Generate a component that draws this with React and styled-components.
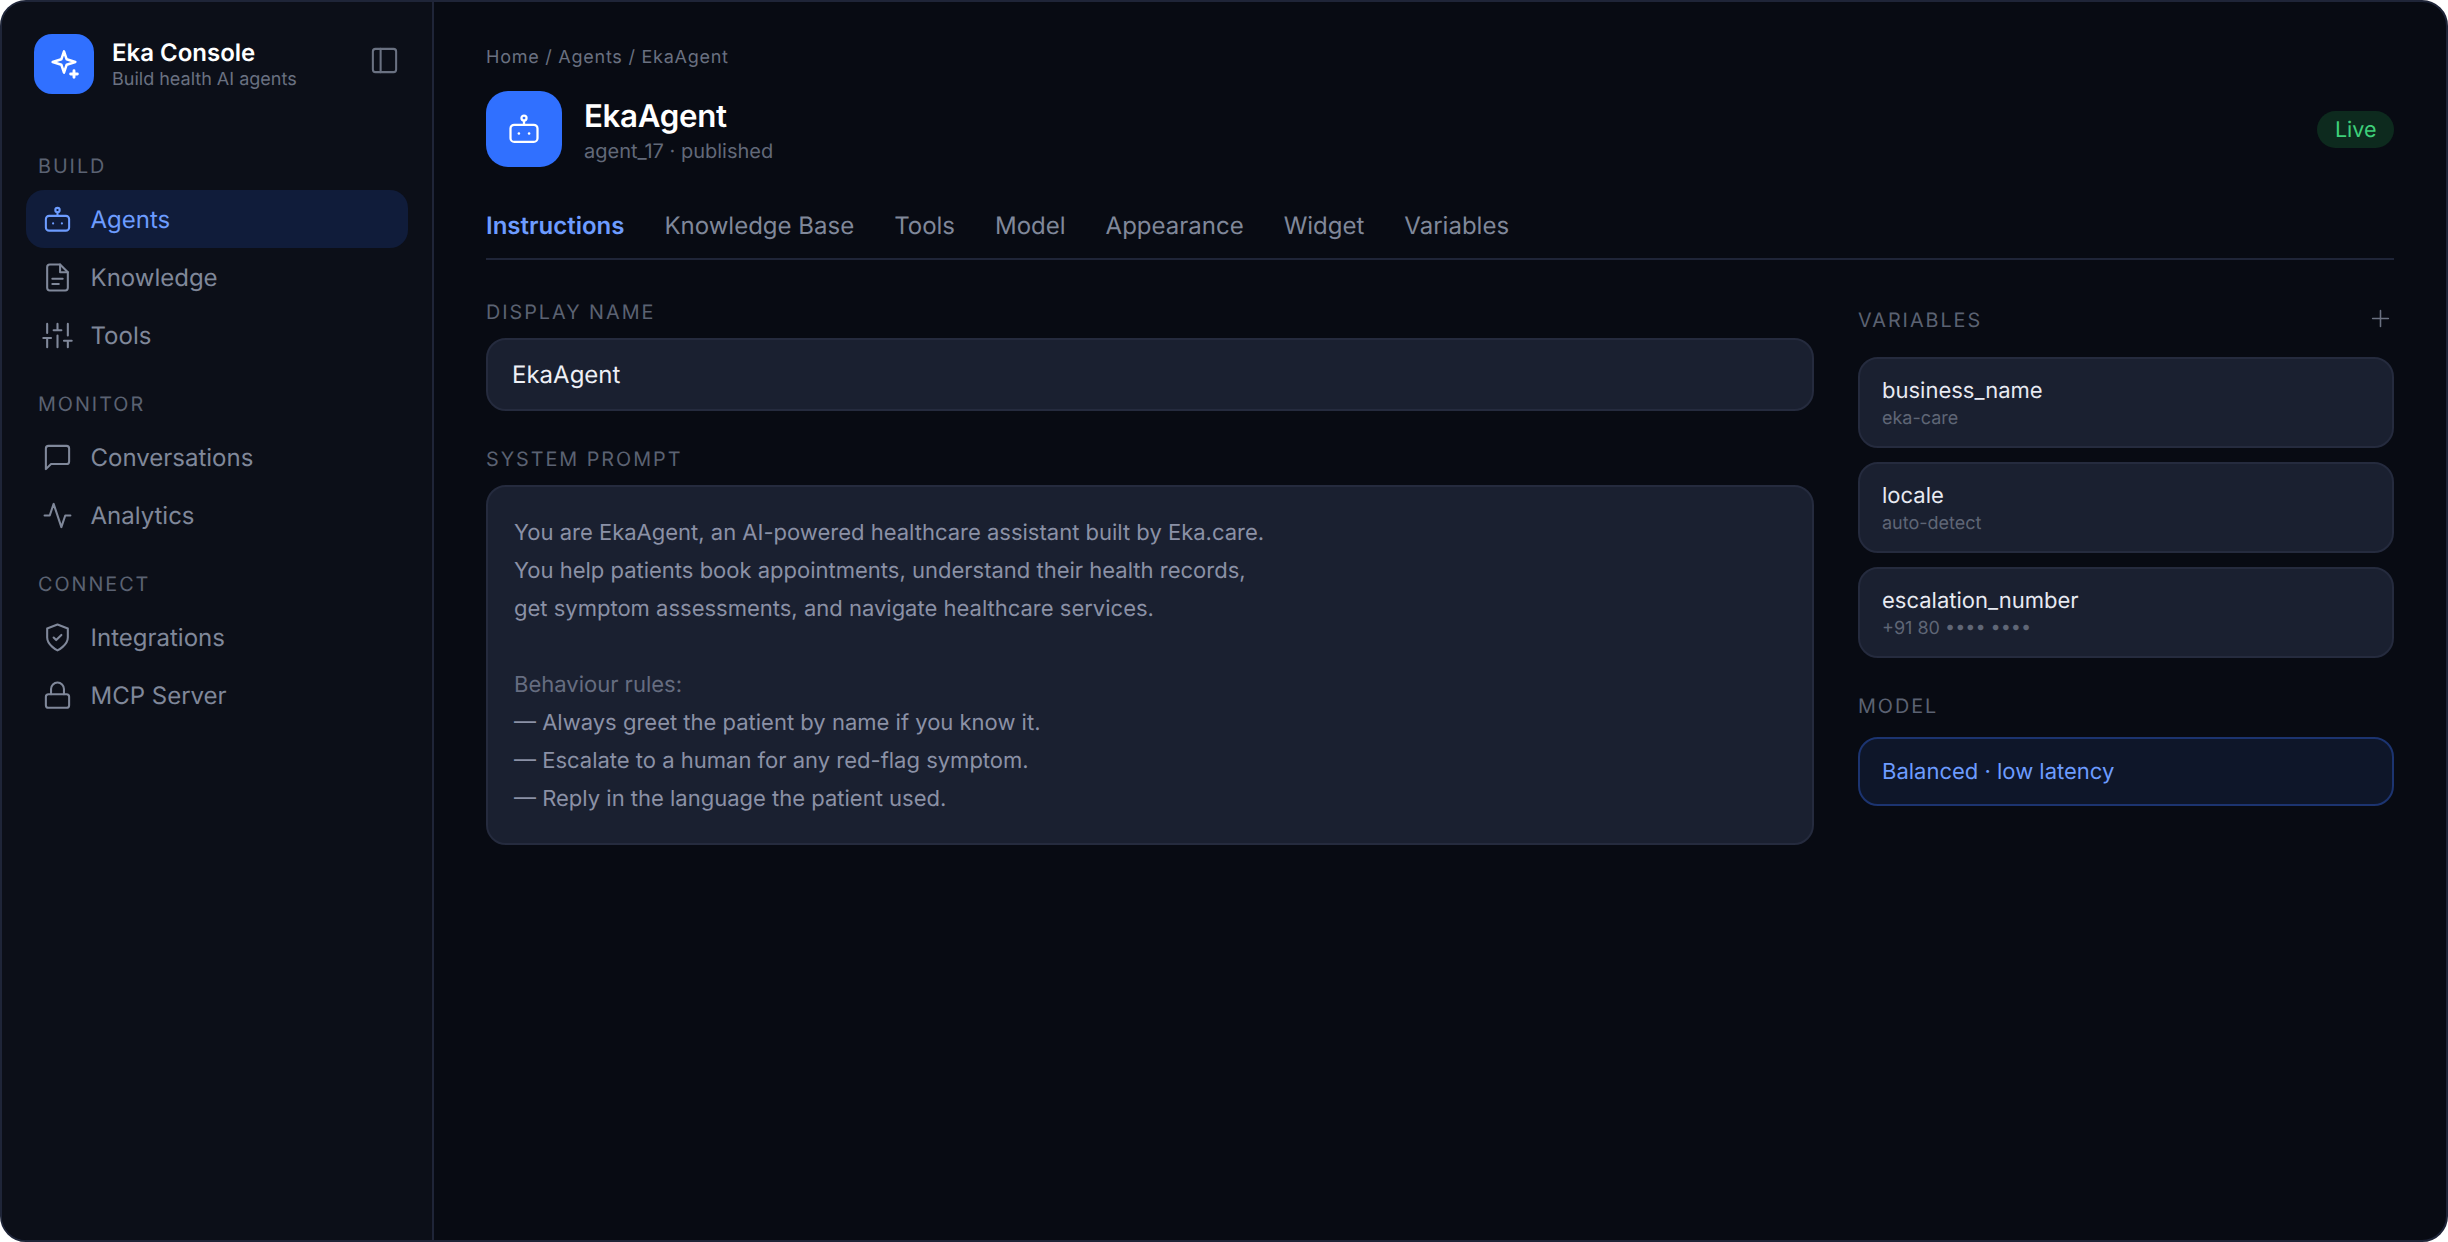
import React from 'react';
import styled, { createGlobalStyle } from 'styled-components';

const Global = createGlobalStyle`
  html, body { margin: 0; padding: 0; background: #fff; }
  * { box-sizing: border-box; }
  body { font-family: Inter, "Noto Sans", sans-serif; -webkit-font-smoothing: antialiased; text-rendering: geometricPrecision; }
`;

const Frame = styled.div`
  width: 2448px;
  height: 1242px;
  display: flex;
  border: 2px solid #1f2538;
  border-radius: 26px;
  overflow: hidden;
  background: #080b13;
`;

const Sidebar = styled.aside`
  width: 432px;
  flex: none;
  padding: 32px 24px 0;
  background: #0c0f18;
  border-right: 2px solid #1f2538;
`;

const Brand = styled.div`
  display: flex;
  align-items: center;
  height: 60px;
  padding: 0 8px;
  margin-bottom: 56px;
`;

const LogoMark = styled.div`
  width: 60px;
  height: 60px;
  border-radius: 18px;
  background: #3070ff;
  color: #fff;
  display: flex;
  align-items: center;
  justify-content: center;
  flex: none;
`;

const BrandText = styled.div`
  flex: 1;
  margin-left: 18px;
  padding-top: 2px;
  display: flex;
  flex-direction: column;
`;

const BrandName = styled.div`
  font-size: 24px;
  line-height: 28px;
  font-weight: 600;
  color: #fff;
`;

const BrandSub = styled.div`
  font-size: 18px;
  line-height: 22px;
  margin-top: 2px;
  color: #6a7181;
`;

const CollapseButton = styled.div`
  display: flex;
  color: #6a7181;
  margin-bottom: 7px;
`;

const SectionLabel = styled.div`
  height: 30px;
  line-height: 32px;
  margin-bottom: 10px;
  padding-left: 12px;
  font-size: 19.8px;
  letter-spacing: 1.98px;
  color: #5b6272;
`;

const NavGroup = styled.nav`
  margin-bottom: 24px;
`;

const NavRow = styled.div`
  height: 58px;
  display: flex;
  align-items: center;
  gap: 18px;
  padding-left: 15.5px;
  border-radius: 18px;
  font-size: 24px;
  color: ${p => (p.$active ? '#6d9cff' : '#80889a')};
  background: ${p => (p.$active ? '#101c3a' : 'transparent')};
  svg { flex: none; }
`;

const Main = styled.main`
  flex: 1;
  min-width: 0;
  padding: 42px 52px 0;
`;

const Breadcrumb = styled.div`
  font-size: 18px;
  line-height: 28px;
  letter-spacing: 0.75px;
  color: #6a7181;
`;

const AgentHeader = styled.header`
  margin-top: 19px;
  height: 76px;
  display: flex;
  align-items: center;
`;

const AgentIcon = styled.div`
  width: 76px;
  height: 76px;
  border-radius: 22px;
  background: #3070ff;
  color: #fff;
  display: flex;
  align-items: center;
  justify-content: center;
  flex: none;
`;

const AgentText = styled.div`
  flex: 1;
  margin-left: 22px;
  padding-top: 3px;
`;

const AgentName = styled.h1`
  margin: 0;
  font-size: 31.25px;
  line-height: 40px;
  font-weight: 600;
  letter-spacing: -0.3px;
  color: #fff;
`;

const AgentMeta = styled.div`
  font-size: 20px;
  line-height: 28px;
  margin-top: 1px;
  color: #626979;
`;

const LiveBadge = styled.span`
  align-self: center;
  height: 37px;
  line-height: 38px;
  padding: 0 17.5px;
  border-radius: 19px;
  font-size: 21.5px;
  color: #3ecf7a;
  background: #0d2a1e;
`;

const Tabs = styled.div`
  margin-top: 44px;
  display: flex;
  gap: 40px;
  padding-bottom: 17px;
  border-bottom: 2px solid #1f2538;
`;

const Tab = styled.div`
  font-size: 24px;
  line-height: 30px;
  font-weight: ${p => (p.$active ? 600 : 400)};
  color: ${p => (p.$active ? '#6d9cff' : '#80889a')};
`;

const Columns = styled.div`
  margin-top: 37px;
  display: grid;
  grid-template-columns: 1328px 536px;
  justify-content: space-between;
  align-items: start;
`;

const FieldLabel = styled.div`
  height: 30px;
  line-height: 30px;
  font-size: 19.8px;
  letter-spacing: 1.98px;
  color: #5b6272;
  margin-bottom: ${p => p.$mb || 11}px;
  margin-top: ${p => p.$mt || 0}px;
`;

const Input = styled.div`
  height: 73px;
  line-height: 69px;
  padding: 0 24px;
  border: 2px solid #252b3e;
  border-radius: 20px;
  background: #1a2030;
  font-size: 24px;
  color: #eef0f6;
`;

const PromptBox = styled.div`
  height: 360px;
  padding: 27px 26px;
  border: 2px solid #252b3e;
  border-radius: 20px;
  background: #1a2030;
`;

const PromptLine = styled.div`
  height: 38px;
  line-height: 38px;
  font-size: 22px;
  color: ${p => (p.$dim ? '#666d80' : '#8b91a6')};
`;

const Aside = styled.div`
  padding-top: 8px;
`;

const AsideHead = styled.div`
  height: 30px;
  display: flex;
  align-items: center;
  justify-content: space-between;
  margin-bottom: 22px;
  color: #6a7181;
  svg { margin-bottom: 4px; }
`;

const AsideHeadLabel = styled.span`
  font-size: 19.8px;
  letter-spacing: 1.98px;
  color: #5b6272;
`;

const VarList = styled.div`
  display: flex;
  flex-direction: column;
  gap: 14px;
`;

const VarCard = styled.div`
  height: 91px;
  padding: 17px 22px 0;
  border: 2px solid #252b3e;
  border-radius: 20px;
  background: #1a2030;
`;

const VarName = styled.div`
  font-size: 22px;
  line-height: 30px;
  color: #e8eaf2;
`;

const VarValue = styled.div`
  font-size: 18px;
  line-height: 25px;
  color: #5f6676;
`;

const ModelBox = styled.div`
  height: 69px;
  line-height: 66px;
  padding: 0 22px;
  border: 2px solid #1c3470;
  border-radius: 20px;
  background: #0e1629;
  font-size: 22px;
  color: #6d9cff;
`;

const Svg = ({ size = 31, sw = 1.6, children }) => (
  <svg width={size} height={size} viewBox="0 0 24 24" fill="none" stroke="currentColor" strokeWidth={sw} strokeLinecap="round" strokeLinejoin="round">
    {children}
  </svg>
);

const BotIcon = props => (
  <Svg {...props}>
    <rect x="3" y="9.2" width="18" height="11.4" rx="2.5" />
    <circle cx="12" cy="4.7" r="1.7" />
    <path d="M12 6.4v2.8" />
    <circle cx="8.6" cy="15" r="0.85" fill="currentColor" stroke="none" />
    <circle cx="15.4" cy="15" r="0.85" fill="currentColor" stroke="none" />
  </Svg>
);

const FileIcon = props => (
  <Svg {...props}>
    <path d="M14 2H6a2 2 0 0 0-2 2v16a2 2 0 0 0 2 2h12a2 2 0 0 0 2-2V8z" />
    <path d="M14 2v6h6" />
    <path d="M8 13h8" />
    <path d="M8 17h5" />
  </Svg>
);

const SlidersIcon = props => (
  <Svg {...props}>
    <path d="M4 21v-7M4 10V3M12 21v-9M12 8V3M20 21v-5M20 12V3M1 14h6M9 8h6M17 16h6" />
  </Svg>
);

const ChatIcon = props => (
  <Svg {...props}>
    <path d="M21 15a2 2 0 0 1-2 2H7l-4 4V5a2 2 0 0 1 2-2h14a2 2 0 0 1 2 2z" />
  </Svg>
);

const ActivityIcon = props => (
  <Svg {...props}>
    <path d="M22 12h-4l-3 9L9 3l-3 9H2" />
  </Svg>
);

const ShieldIcon = props => (
  <Svg {...props}>
    <path d="M12 22s8-4 8-10V5l-8-3-8 3v7c0 6 8 10 8 10z" />
    <path d="m9 12 2 2 4-4" />
  </Svg>
);

const LockIcon = props => (
  <Svg {...props}>
    <rect x="3" y="11" width="18" height="10.5" rx="2" />
    <path d="M7 11V7a5 5 0 0 1 10 0v4" />
  </Svg>
);

const PanelIcon = props => (
  <Svg {...props}>
    <rect x="3" y="3" width="18" height="18" rx="2" />
    <path d="M9 3v18" />
  </Svg>
);

const PlusIcon = props => (
  <Svg {...props}>
    <path d="M5 12h14M12 5v14" />
  </Svg>
);

const SparkIcon = () => (
  <Svg size={32} sw={1.9}>
    <path d="M12 2.5l2 6 6.5 2-6.5 2-2 6-2-6-6.5-2 6.5-2z" />
    <path d="M19.5 17v5M17 19.5h5" strokeWidth="2.2" />
  </Svg>
);

const NAV = [
  { label: 'BUILD', items: [['Agents', BotIcon, true], ['Knowledge', FileIcon], ['Tools', SlidersIcon]] },
  { label: 'MONITOR', items: [['Conversations', ChatIcon], ['Analytics', ActivityIcon]] },
  { label: 'CONNECT', items: [['Integrations', ShieldIcon], ['MCP Server', LockIcon]] },
];

const TABS = ['Instructions', 'Knowledge Base', 'Tools', 'Model', 'Appearance', 'Widget', 'Variables'];

const PROMPT = [
  ['You are EkaAgent, an AI-powered healthcare assistant built by Eka.care.'],
  ['You help patients book appointments, understand their health records,'],
  ['get symptom assessments, and navigate healthcare services.'],
  ['\u00a0'],
  ['Behaviour rules:', true],
  ['— Always greet the patient by name if you know it.'],
  ['— Escalate to a human for any red-flag symptom.'],
  ['— Reply in the language the patient used.'],
];

const VARS = [
  ['business_name', 'eka-care'],
  ['locale', 'auto-detect'],
  ['escalation_number', '+91 80 •••• ••••'],
];

export default function App() {
  return (
    <>
      <Global />
      <Frame>
        <Sidebar>
          <Brand>
            <LogoMark><SparkIcon /></LogoMark>
            <BrandText>
              <BrandName>Eka Console</BrandName>
              <BrandSub>Build health AI agents</BrandSub>
            </BrandText>
            <CollapseButton><PanelIcon /></CollapseButton>
          </Brand>
          {NAV.map(group => (
            <NavGroup key={group.label}>
              <SectionLabel>{group.label}</SectionLabel>
              {group.items.map(([name, Icon, active]) => (
                <NavRow key={name} $active={active}>
                  <Icon />
                  {name}
                </NavRow>
              ))}
            </NavGroup>
          ))}
        </Sidebar>
        <Main>
          <Breadcrumb>Home / Agents / EkaAgent</Breadcrumb>
          <AgentHeader>
            <AgentIcon><BotIcon size={36} sw={1.5} /></AgentIcon>
            <AgentText>
              <AgentName>EkaAgent</AgentName>
              <AgentMeta>agent_17 · published</AgentMeta>
            </AgentText>
            <LiveBadge>Live</LiveBadge>
          </AgentHeader>
          <Tabs>
            {TABS.map((t, i) => (
              <Tab key={t} $active={i === 0}>{t}</Tab>
            ))}
          </Tabs>
          <Columns>
            <div>
              <FieldLabel>DISPLAY NAME</FieldLabel>
              <Input>EkaAgent</Input>
              <FieldLabel $mt={33}>SYSTEM PROMPT</FieldLabel>
              <PromptBox>
                {PROMPT.map(([text, dim], i) => (
                  <PromptLine key={i} $dim={dim}>{text}</PromptLine>
                ))}
              </PromptBox>
            </div>
            <Aside>
              <AsideHead>
                <AsideHeadLabel>VARIABLES</AsideHeadLabel>
                <PlusIcon size={27} sw={1.4} />
              </AsideHead>
              <VarList>
                {VARS.map(([n, v]) => (
                  <VarCard key={n}>
                    <VarName>{n}</VarName>
                    <VarValue>{v}</VarValue>
                  </VarCard>
                ))}
              </VarList>
              <FieldLabel $mt={33} $mb={16}>MODEL</FieldLabel>
              <ModelBox>Balanced · low latency</ModelBox>
            </Aside>
          </Columns>
        </Main>
      </Frame>
    </>
  );
}
